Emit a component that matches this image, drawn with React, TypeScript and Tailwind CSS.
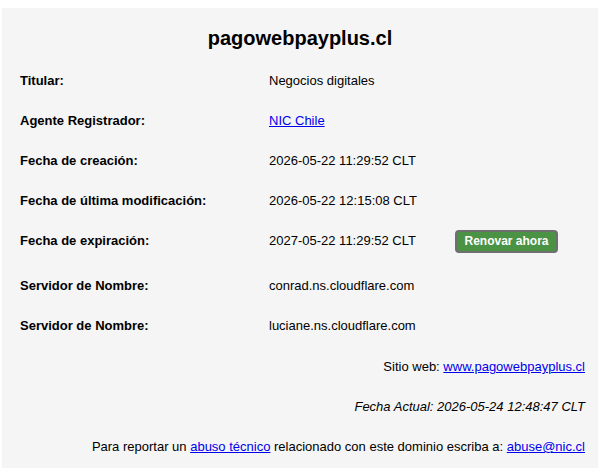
import { ReactNode } from 'react';

interface Row {
  label: string;
  value: ReactNode;
  action?: ReactNode;
}

const rows: Row[] = [
  { label: 'Titular:', value: 'Negocios digitales' },
  {
    label: 'Agente Registrador:',
    value: (
      <a href="#" className="text-[#0000ee] underline">
        NIC Chile
      </a>
    ),
  },
  { label: 'Fecha de creación:', value: '2026-05-22 11:29:52 CLT' },
  { label: 'Fecha de última modificación:', value: '2026-05-22 12:15:08 CLT' },
  {
    label: 'Fecha de expiración:',
    value: '2027-05-22 11:29:52 CLT',
    action: (
      <button className="h-[23px] w-[103px] rounded-[4px] border-2 border-[#6f6f6f] bg-[#4a9344] text-[12px] font-bold text-white">
        Renovar ahora
      </button>
    ),
  },
];

const servers = ['conrad.ns.cloudflare.com', 'luciane.ns.cloudflare.com'];

function InfoRow({ label, value, action }: Row) {
  return (
    <div className="flex h-[40px] items-center">
      <div className="w-[249px] font-bold">{label}</div>
      <div className="w-[186px]">{value}</div>
      {action}
    </div>
  );
}

export default function App() {
  return (
    <div className="min-h-[468px] bg-white pt-[8px] font-['Liberation_Sans',Arial,sans-serif] text-[13px] text-black">
      <div className="mx-[2px] min-h-[460px] bg-[#f5f5f5] px-[18px] pt-[18px]">
        <h1 className="text-center text-[20px] font-bold leading-[24px]">pagowebpayplus.cl</h1>

        <div className="mt-[11px]">
          {rows.map((r) => (
            <InfoRow key={r.label} {...r} />
          ))}
          <div className="mt-[5px]">
            {servers.map((s) => (
              <InfoRow key={s} label="Servidor de Nombre:" value={s} />
            ))}
          </div>
        </div>

        {/* footer lines */}
        <div className="mr-[-5px] mt-[1px] text-right">
          <div className="flex h-[40px] items-center justify-end">
            <span>
              Sitio web:{' '}
              <a href="#" className="text-[#0000ee] underline">
                www.pagowebpayplus.cl
              </a>
            </span>
          </div>
          <div className="flex h-[40px] items-center justify-end italic">
            Fecha Actual: 2026-05-24 12:48:47 CLT
          </div>
          <div className="flex h-[40px] items-center justify-end">
            <span>
              Para reportar un{' '}
              <a href="#" className="text-[#0000ee] underline">
                abuso técnico
              </a>{' '}
              relacionado con este dominio escriba a:{' '}
              <a href="#" className="text-[#0000ee] underline">
                abuse@nic.cl
              </a>
            </span>
          </div>
        </div>
      </div>
    </div>
  );
}
